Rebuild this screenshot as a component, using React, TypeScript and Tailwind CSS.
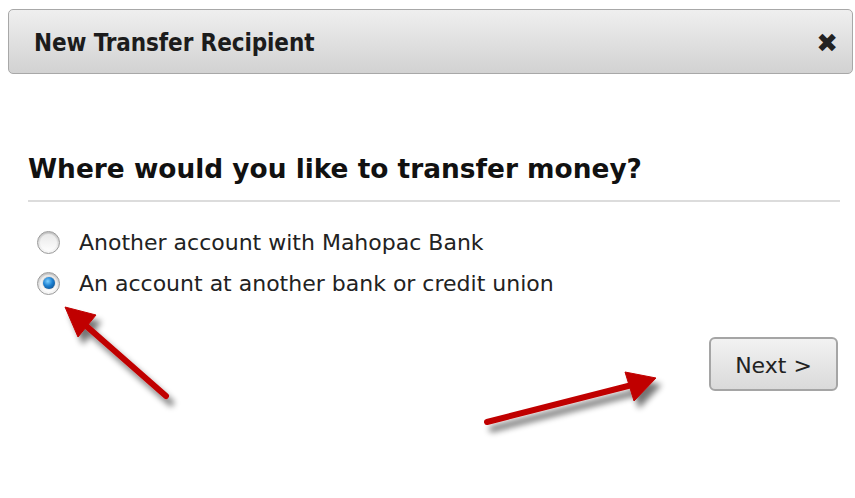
import { useState } from "react";

const options = [
  { id: "internal", label: "Another account with Mahopac Bank" },
  { id: "external", label: "An account at another bank or credit union" },
];

function Radio({ checked }: { checked: boolean }) {
  return (
    <span className="relative flex h-[23px] w-[23px] shrink-0 items-center justify-center rounded-full border border-[#9a9a9a] bg-gradient-to-b from-[#d8d8d8] to-[#f8f8f8] shadow-[inset_0_1px_2px_rgba(0,0,0,0.15)]">
      <span className="flex h-[17px] w-[17px] items-center justify-center rounded-full bg-gradient-to-b from-[#e9e9e9] to-[#fdfdfd]">
        {checked ? (
          <span className="h-[12px] w-[12px] rounded-full bg-[radial-gradient(circle_at_40%_35%,#7fd0ff_0%,#1b7fd0_45%,#0b3f78_100%)] shadow-[0_0_1px_rgba(0,0,0,0.6)]" />
        ) : null}
      </span>
    </span>
  );
}

// red callout arrows drawn over the dialog
function Callouts() {
  return (
    <svg
      className="pointer-events-none absolute left-0 top-0"
      width="855"
      height="498"
      viewBox="0 0 855 498"
    >
      <defs>
        <filter id="arrowShadow" x="-20%" y="-20%" width="150%" height="160%">
          <feGaussianBlur in="SourceAlpha" stdDeviation="3" />
          <feOffset dx="5" dy="7" result="blur" />
          <feComponentTransfer>
            <feFuncA type="linear" slope="0.55" />
          </feComponentTransfer>
          <feMerge>
            <feMergeNode />
            <feMergeNode in="SourceGraphic" />
          </feMerge>
        </filter>
      </defs>
      <g filter="url(#arrowShadow)" fill="#c00000" stroke="#c00000">
        <line x1="166" y1="396" x2="84" y2="324" strokeWidth="6" strokeLinecap="round" />
        <polygon points="65,307 96,315 78,337" strokeWidth="1" />
        <line x1="487" y1="422" x2="632" y2="385" strokeWidth="6" strokeLinecap="round" />
        <polygon points="656,378 625,372 634,401" strokeWidth="1" />
      </g>
    </svg>
  );
}

export default function App() {
  const [choice, setChoice] = useState("external");

  return (
    <div className="relative h-[498px] w-[855px] overflow-hidden bg-white font-['DejaVu_Sans',sans-serif] text-[#1a1a1a]">
      <div className="ml-[8px] mr-[2px] mt-[9px] flex h-[65px] items-center justify-between rounded-[5px] border border-[#a8a8a8] bg-gradient-to-b from-[#efefef] to-[#d2d2d2] pl-[25px] pr-[14px]">
        <h2 className="pt-[3px] font-['DejaVu_Sans_Condensed','DejaVu_Sans',sans-serif] text-[24px] font-bold tracking-[-0.1px] text-[#1c1c1c]">
          New Transfer Recipient
        </h2>
        <button type="button" className="pt-[3px] text-[26px] font-bold leading-none text-[#222]">
          ✖
        </button>
      </div>

      <div className="pl-[28px] pr-[15px] pt-[79px]">
        <h1 className="text-[26.4px] font-bold leading-[32px] text-[#111]">
          Where would you like to transfer money?
        </h1>
        <div className="mt-[15px] h-[2px] bg-[#dcdcdc]" />

        <div className="mt-[28px] flex flex-col gap-[17px] pl-[9px]">
          {options.map((option) => (
            <label
              key={option.id}
              onClick={() => setChoice(option.id)}
              className="flex h-[24px] cursor-pointer items-center gap-[19px] text-[22px] text-[#222]"
            >
              <Radio checked={choice === option.id} />
              <span>{option.label}</span>
            </label>
          ))}
        </div>

        <div className="mt-[42px] flex justify-end pr-[2px]">
          <button
            type="button"
            className="flex h-[54px] w-[129px] items-center justify-center rounded-[6px] border-2 border-[#a5a5a5] bg-gradient-to-b from-[#f2f2f2] via-[#e6e6e6] to-[#dadada] pt-[2px] text-[22px] text-[#222]"
          >
            Next &gt;
          </button>
        </div>
      </div>

      <Callouts />
    </div>
  );
}
